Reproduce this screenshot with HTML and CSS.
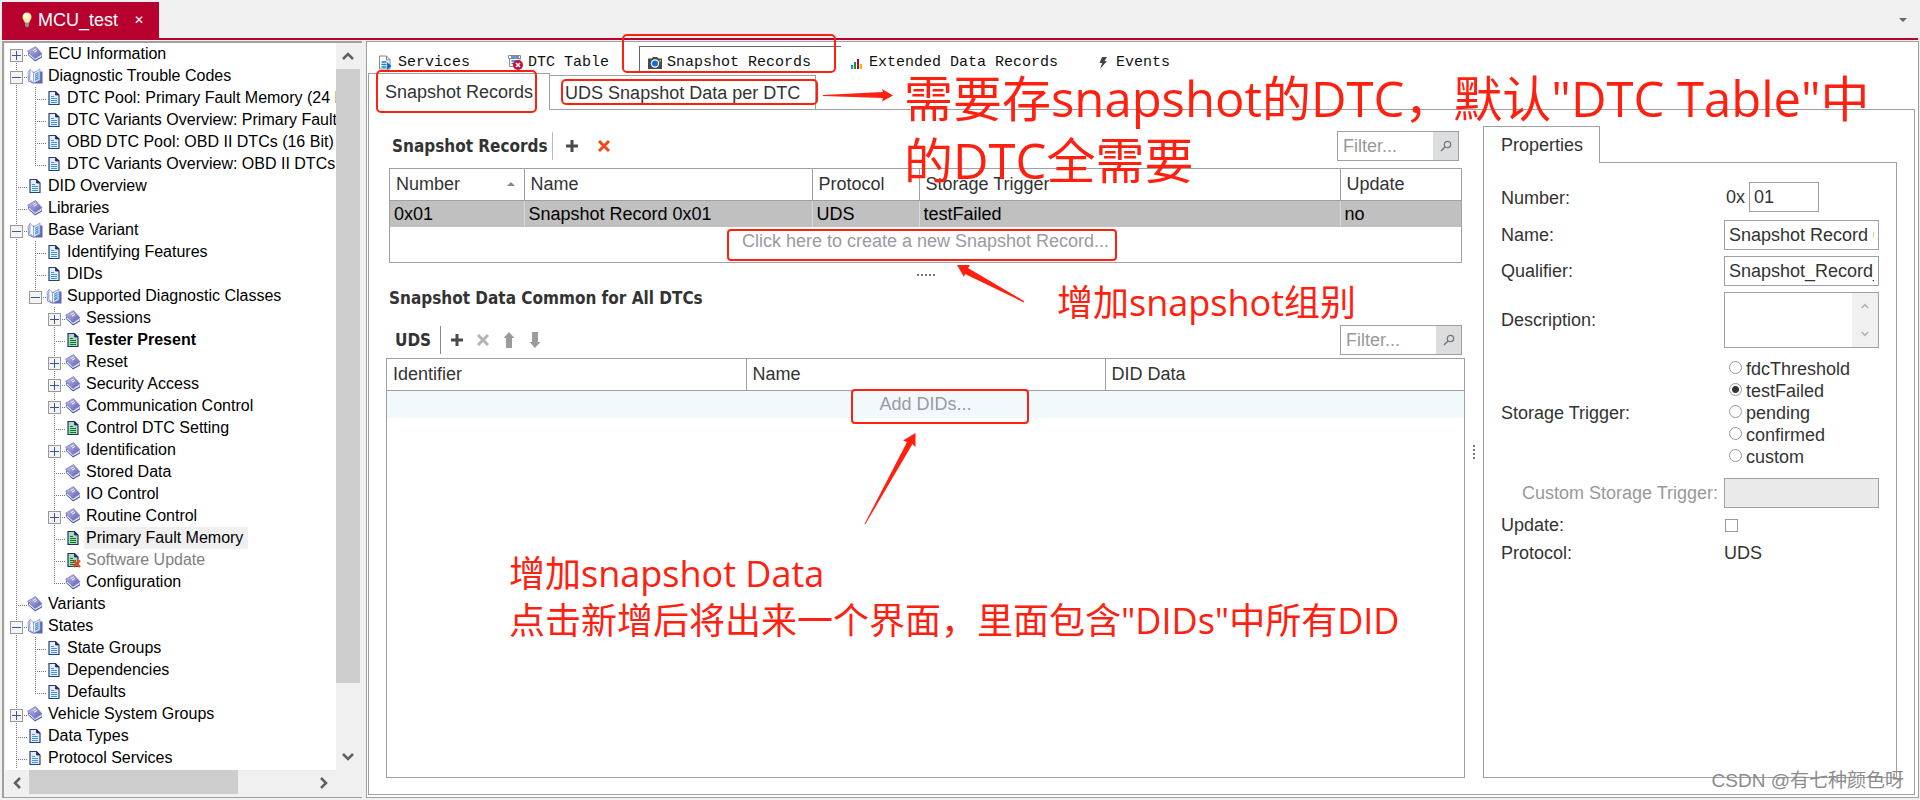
FILE: index.html
```
<!DOCTYPE html>
<html lang="zh-CN">

<head>
  <meta charset="UTF-8" />
  <meta name="viewport" content="width=device-width, initial-scale=1.0" />
  <title>MCU_test</title>
  <link rel="stylesheet" href="styles.css">
</head>

<body>
  <!-- icons -->
  <svg class="sprite" aria-hidden="true">
    <defs>
      <linearGradient id="g-book" x1="0" y1="0" x2="1" y2="1">
        <stop offset="0" stop-color="#c4c4ee" />
        <stop offset="1" stop-color="#5a5ab4" />
      </linearGradient>
      <linearGradient id="g-page" x1="0" y1="0" x2="1" y2="0">
        <stop offset="0" stop-color="#fff" />
        <stop offset="1" stop-color="#c9d6f2" />
      </linearGradient>
    </defs>
    <symbol id="book" viewBox="0 0 16 16">
      <path d="M1 6v3l7 6.500 7-4V9l-7 4z" fill="#4f5da8" />
      <path d="M2 7.500l6 5.200 6.500-3.500v1.300L8 14 1.500 8.500z" fill="#f2f4fb" />
      <path d="M0.500 5.200L8.500 0.500l6.500 7.300-7 4.700z" fill="url(#g-book)" stroke="#6a6ab8" stroke-width=".6" />
      <path d="M5.800 4.600l3-1.700M7 6.200l3-1.700" stroke="#fff" stroke-width="1" />
    </symbol>
    <symbol id="book-open" viewBox="0 0 16 16">
      <path d="M1 4v9l5 2.500h9.500V3.500H13z" fill="#5b68b4" />
      <path d="M1 4l2-2v9.500l4 3L1.500 13z" fill="#dfe6f8" stroke="#7d8cc8" stroke-width=".7" />
      <path d="M3 1l3.500 4v10L3 11.500z" fill="#fff" stroke="#8794cc" stroke-width=".7" />
      <path d="M6.500 5L13 1v11l-6.500 3z" fill="url(#g-page)" stroke="#8794cc" stroke-width=".7" />
      <path d="M8 6.500l3.500-2M8 8.500l3.500-2M8 10.500l3.500-2M8 12.300l3.500-2" stroke="#3c8fd0" stroke-width="1.100" />
    </symbol>
    <symbol id="doc" viewBox="0 0 16 16">
      <path d="M3 1.500h6.500L13 5v9.500H3z" fill="#e2effa" stroke="#27407c" stroke-width="1.200" />
      <path d="M9.500 1.500V5H13z" fill="#27276c" stroke="#27276c" stroke-width=".8" />
      <path d="M5 6.500h3M5 8.500h6M5 10.500h6M5 12.500h6" stroke="#3f97d8" />
    </symbol>
    <symbol id="doc-green" viewBox="0 0 16 16">
      <path d="M3 1.500h6.500L13 5v9.500H3z" fill="#a6dcc0" stroke="#27305c" stroke-width="1.200" />
      <path d="M9.500 1.500V5H13z" fill="#27276c" stroke="#27276c" stroke-width=".8" />
      <path d="M5 6.500h3M5 8.500h6M5 10.500h6M5 12.500h6" stroke="#08771c" />
    </symbol>
    <symbol id="doc-off" viewBox="0 0 16 16">
      <use href="#doc-green" />
      <path d="M8.500 8.500l6.500 6.500M15 8.500L8.500 15" stroke="#e04a20" stroke-width="2.400" />
    </symbol>
    <symbol id="bulb" viewBox="0 0 10 16">
      <circle cx="5" cy="5" r="4.500" fill="#fff3b4" />
      <path d="M1.500 7.500h7L7 11H3z" fill="#fbe9a0" />
      <path d="M3 10.500h4V14L5 15.500 3 14z" fill="#8f8f8f" />
      <circle cx="3.700" cy="3.700" r="1.600" fill="#fff" />
    </symbol>
    <symbol id="search" viewBox="0 0 12 12">
      <circle cx="7.500" cy="4.500" r="3.200" fill="none" stroke="#777" stroke-width="1.200" />
      <path d="M5.200 6.800L1 11" stroke="#777" stroke-width="1.500" />
    </symbol>
    <symbol id="plus" viewBox="0 0 14 14">
      <path d="M7 1v12M1 7h12" stroke="#4a4a4a" stroke-width="3" />
    </symbol>
    <symbol id="cross" viewBox="0 0 14 14">
      <path d="M2 2l10 10M12 2L2 12" stroke="currentColor" stroke-width="3" />
    </symbol>
    <symbol id="arrow" viewBox="0 0 12 18">
      <path d="M6 1l5.500 6H9v10H3V7H.5z" fill="#9b9b9b" />
    </symbol>
    <symbol id="chevron" viewBox="0 0 12 8">
      <path d="M1 7l5-5 5 5" fill="none" stroke="currentColor" stroke-width="2.500" />
    </symbol>
  </svg>

  <header class="titlebar">
    <div class="file-tab">
      <svg class="bulb"><use href="#bulb" /></svg>
      <span>MCU_test</span>
      <button class="file-close" aria-label="Close">✕</button>
    </div>
    <button class="tab-menu" aria-label="Open tabs"><span class="triangle-down"></span></button>
  </header>

  <div class="workspace">
    <nav class="tree-pane" aria-label="Explorer">
      <div class="tree-view">
        <ul class="tree">
          <li>
            <div class="node"><button class="toggle plus" aria-label="Expand"></button><svg class="ico"><use href="#book" /></svg><span>ECU Information</span></div>
          </li>
          <li>
            <div class="node"><button class="toggle" aria-label="Collapse"></button><svg class="ico"><use href="#book-open" /></svg><span>Diagnostic Trouble Codes</span></div>
            <ul>
              <li><div class="node leaf"><svg class="ico"><use href="#doc" /></svg><span>DTC Pool: Primary Fault Memory (24 Bit)</span></div></li>
              <li><div class="node leaf"><svg class="ico"><use href="#doc" /></svg><span>DTC Variants Overview: Primary Fault Memory</span></div></li>
              <li><div class="node leaf"><svg class="ico"><use href="#doc" /></svg><span>OBD DTC Pool: OBD II DTCs (16 Bit)</span></div></li>
              <li><div class="node leaf"><svg class="ico"><use href="#doc" /></svg><span>DTC Variants Overview: OBD II DTCs (16 Bit)</span></div></li>
            </ul>
          </li>
          <li><div class="node leaf"><svg class="ico"><use href="#doc" /></svg><span>DID Overview</span></div></li>
          <li><div class="node leaf"><svg class="ico"><use href="#book" /></svg><span>Libraries</span></div></li>
          <li>
            <div class="node"><button class="toggle" aria-label="Collapse"></button><svg class="ico"><use href="#book-open" /></svg><span>Base Variant</span></div>
            <ul>
              <li><div class="node leaf"><svg class="ico"><use href="#doc" /></svg><span>Identifying Features</span></div></li>
              <li><div class="node leaf"><svg class="ico"><use href="#doc" /></svg><span>DIDs</span></div></li>
              <li>
                <div class="node"><button class="toggle" aria-label="Collapse"></button><svg class="ico"><use href="#book-open" /></svg><span>Supported Diagnostic Classes</span></div>
                <ul>
                  <li><div class="node"><button class="toggle plus" aria-label="Expand"></button><svg class="ico"><use href="#book" /></svg><span>Sessions</span></div></li>
                  <li><div class="node leaf"><svg class="ico"><use href="#doc-green" /></svg><span class="strong">Tester Present</span></div></li>
                  <li><div class="node"><button class="toggle plus" aria-label="Expand"></button><svg class="ico"><use href="#book" /></svg><span>Reset</span></div></li>
                  <li><div class="node"><button class="toggle plus" aria-label="Expand"></button><svg class="ico"><use href="#book" /></svg><span>Security Access</span></div></li>
                  <li><div class="node"><button class="toggle plus" aria-label="Expand"></button><svg class="ico"><use href="#book" /></svg><span>Communication Control</span></div></li>
                  <li><div class="node leaf"><svg class="ico"><use href="#doc-green" /></svg><span>Control DTC Setting</span></div></li>
                  <li><div class="node"><button class="toggle plus" aria-label="Expand"></button><svg class="ico"><use href="#book" /></svg><span>Identification</span></div></li>
                  <li><div class="node leaf"><svg class="ico"><use href="#book" /></svg><span>Stored Data</span></div></li>
                  <li><div class="node leaf"><svg class="ico"><use href="#book" /></svg><span>IO Control</span></div></li>
                  <li><div class="node"><button class="toggle plus" aria-label="Expand"></button><svg class="ico"><use href="#book" /></svg><span>Routine Control</span></div></li>
                  <li><div class="node leaf"><svg class="ico"><use href="#doc-green" /></svg><span class="selected">Primary Fault Memory</span></div></li>
                  <li><div class="node leaf"><svg class="ico"><use href="#doc-off" /></svg><span class="muted">Software Update</span></div></li>
                  <li><div class="node leaf"><svg class="ico"><use href="#book" /></svg><span>Configuration</span></div></li>
                </ul>
              </li>
            </ul>
          </li>
          <li><div class="node leaf"><svg class="ico"><use href="#book" /></svg><span>Variants</span></div></li>
          <li>
            <div class="node"><button class="toggle" aria-label="Collapse"></button><svg class="ico"><use href="#book-open" /></svg><span>States</span></div>
            <ul>
              <li><div class="node leaf"><svg class="ico"><use href="#doc" /></svg><span>State Groups</span></div></li>
              <li><div class="node leaf"><svg class="ico"><use href="#doc" /></svg><span>Dependencies</span></div></li>
              <li><div class="node leaf"><svg class="ico"><use href="#doc" /></svg><span>Defaults</span></div></li>
            </ul>
          </li>
          <li><div class="node"><button class="toggle plus" aria-label="Expand"></button><svg class="ico"><use href="#book" /></svg><span>Vehicle System Groups</span></div></li>
          <li><div class="node leaf"><svg class="ico"><use href="#doc" /></svg><span>Data Types</span></div></li>
          <li><div class="node leaf"><svg class="ico"><use href="#doc" /></svg><span>Protocol Services</span></div></li>
        </ul>
      </div>
      <div class="vscroll">
        <button aria-label="Scroll up"><svg class="chev"><use href="#chevron" /></svg></button>
        <div class="track"><div class="thumb"></div></div>
        <button aria-label="Scroll down"><svg class="chev down"><use href="#chevron" /></svg></button>
      </div>
      <div class="hscroll">
        <button aria-label="Scroll left"><svg class="chev left"><use href="#chevron" /></svg></button>
        <div class="track"><div class="thumb"></div></div>
        <button aria-label="Scroll right"><svg class="chev right"><use href="#chevron" /></svg></button>
      </div>
    </nav>

    <main class="editor">
      <div class="main-tabs">
        <button class="main-tab">
          <svg class="tab-ico" viewBox="0 0 16 16">
            <path d="M1.500 1h7L12 4.500V14H1.500z" fill="#fff" stroke="#888" />
            <path d="M8.500 1v4H12" fill="none" stroke="#888" />
            <path d="M3.500 7h5M3.500 9.500h5M3.500 12h5" stroke="#1c7ad0" stroke-width="1.300" />
            <path d="M9 7l4.500 4L9 15z" fill="#0a6fd0" />
          </svg>Services</button>
        <button class="main-tab">
          <svg class="tab-ico" viewBox="0 0 16 16">
            <path d="M1.500 3.500v8h5M.5.5h12v3h-12zM12 3.500v2" fill="#fff" stroke="#888" />
            <path d="M3 2h8M3.500 6h5M3.500 8.500h3" stroke="#1c7ad0" stroke-width="1.300" />
            <circle cx="10" cy="10" r="5" fill="#c0103c" />
            <path d="M8 8l4 4M12 8l-4 4" stroke="#fff" stroke-width="1.600" />
          </svg>DTC Table</button>
        <button class="main-tab active">
          <svg class="tab-ico" viewBox="0 0 16 16">
            <path d="M1 3.500h3.500L6 2h4l1.500 1.500H15V14H1z" fill="#4a4a4a" />
            <circle cx="8" cy="8.500" r="4.200" fill="#fff" />
            <circle cx="8" cy="8.500" r="3" fill="#0a74d6" />
            <path d="M12.500 5h1.500v1.500h-1.500z" fill="#ffd21c" />
          </svg>Snapshot Records</button>
        <button class="main-tab">
          <svg class="tab-ico" viewBox="0 0 16 16">
            <path d="M2 10h2v4H2z" fill="#0a8af0" />
            <path d="M5 7h2v7H5z" fill="#0a9a28" />
            <path d="M8 4h2v10H8z" fill="#b8002e" />
            <path d="M11 9h2v5h-2z" fill="#f4b400" />
          </svg>Extended Data Records</button>
        <button class="main-tab">
          <svg class="tab-ico" viewBox="0 0 16 16">
            <path d="M6 2h5L8.500 6H11L4 14l2.200-6H3.500z" fill="#444" />
          </svg>Events</button>
      </div>

      <div class="sub-tabs">
        <button class="sub-tab active">Snapshot Records</button>
        <button class="sub-tab">UDS Snapshot Data per DTC</button>
        <div class="tab-fill"></div>
      </div>

      <div class="panel">
        <div class="lists">
          <section class="records">
            <div class="toolbar">
              <h2>Snapshot Records</h2>
              <span class="sep"></span>
              <button class="tool" aria-label="Add"><svg><use href="#plus" /></svg></button>
              <button class="tool danger" aria-label="Delete"><svg><use href="#cross" /></svg></button>
              <div class="filter">
                <input type="text" placeholder="Filter..." aria-label="Filter snapshot records">
                <button aria-label="Search"><svg><use href="#search" /></svg></button>
              </div>
            </div>
            <div class="grid-box">
              <table class="grid">
                <colgroup>
                  <col class="c-number">
                  <col class="c-name">
                  <col class="c-protocol">
                  <col>
                  <col class="c-update">
                </colgroup>
                <thead>
                  <tr>
                    <th><div class="sorted">Number<span class="triangle-up"></span></div></th>
                    <th>Name</th>
                    <th>Protocol</th>
                    <th>Storage Trigger</th>
                    <th>Update</th>
                  </tr>
                </thead>
                <tbody>
                  <tr class="current">
                    <td>0x01</td>
                    <td>Snapshot Record 0x01</td>
                    <td>UDS</td>
                    <td>testFailed</td>
                    <td>no</td>
                  </tr>
                  <tr class="create tall">
                    <td colspan="5"><button>Click here to create a new Snapshot Record...</button></td>
                  </tr>
                </tbody>
              </table>
            </div>
          </section>

          <div class="split-h"><i></i><i></i><i></i><i></i><i></i></div>
          <h2 class="section-title">Snapshot Data Common for All DTCs</h2>

          <div class="toolbar uds">
            <h2>UDS</h2>
            <span class="sep dark"></span>
            <button class="tool" aria-label="Add"><svg><use href="#plus" /></svg></button>
            <button class="tool off" aria-label="Delete" disabled><svg><use href="#cross" /></svg></button>
            <button class="tool" aria-label="Move up" disabled><svg class="move"><use href="#arrow" /></svg></button>
            <button class="tool" aria-label="Move down" disabled><svg class="move down"><use href="#arrow" /></svg></button>
            <div class="filter">
              <input type="text" placeholder="Filter..." aria-label="Filter DIDs">
              <button aria-label="Search"><svg><use href="#search" /></svg></button>
            </div>
          </div>
          <div class="grid-box fill">
            <table class="grid">
              <thead>
                <tr>
                  <th>Identifier</th>
                  <th>Name</th>
                  <th>DID Data</th>
                </tr>
              </thead>
              <tbody>
                <tr class="create hover">
                  <td colspan="3"><button>Add DIDs...</button></td>
                </tr>
              </tbody>
            </table>
          </div>
        </div>

        <div class="split-v"><i></i><i></i><i></i><i></i></div>

        <aside class="props">
          <div class="props-tabs">
            <button class="props-tab">Properties</button>
            <div class="tab-fill"></div>
          </div>
          <form class="props-form">
            <label for="number">Number:</label>
            <div class="number-field"><span>0x</span><input id="number" type="text" value="01"></div>

            <label for="name">Name:</label>
            <input id="name" type="text" value="Snapshot Record 0x01">

            <label for="qualifier">Qualifier:</label>
            <input id="qualifier" type="text" value="Snapshot_Record_0x01">

            <label for="description">Description:</label>
            <div class="memo">
              <textarea id="description"></textarea>
              <div class="memo-scroll">
                <svg class="chev small"><use href="#chevron" /></svg>
                <svg class="chev small down"><use href="#chevron" /></svg>
              </div>
            </div>

            <span id="trigger">Storage Trigger:</span>
            <div class="radios" role="radiogroup" aria-labelledby="trigger">
              <label><input type="radio" name="trigger">fdcThreshold</label>
              <label><input type="radio" name="trigger" checked>testFailed</label>
              <label><input type="radio" name="trigger">pending</label>
              <label><input type="radio" name="trigger">confirmed</label>
              <label><input type="radio" name="trigger">custom</label>
            </div>

            <label class="disabled" for="custom">Custom Storage Trigger:</label>
            <input id="custom" type="text" disabled>

            <label for="update">Update:</label>
            <input id="update" type="checkbox">

            <span>Protocol:</span>
            <span>UDS</span>
          </form>
        </aside>
      </div>
    </main>
  </div>

  <!-- notes drawn over the window -->
  <svg class="marks" aria-hidden="true">
    <g fill="none" stroke="#ff2010" stroke-width="2">
      <rect x="623" y="35" width="212" height="37" rx="4" />
      <rect x="377" y="71" width="159" height="41" rx="4" />
      <rect x="562" y="80" width="255" height="24" rx="4" />
      <rect x="728" y="230" width="388" height="30" rx="3" />
      <rect x="852" y="390" width="176" height="33" rx="3" />
    </g>
    <g fill="#ff2010">
      <path d="M823 95l60-3-1-3 11 6.500-11 6 1-3.500-60-2z" />
      <path d="M1024 302.500L965 274l-1 3-7-12 13 0-2 3 56 33z" />
      <path d="M864.500 524L907 442l-4-1.500 12.500-7.500v14l-3-3-47 80z" />
    </g>
  </svg>
  <p class="note note-tab">需要存snapshot的DTC，默认"DTC Table"中<br>的DTC全需要</p>
  <p class="note note-group">增加snapshot组别</p>
  <p class="note note-data">增加snapshot Data<br>点击新增后将出来一个界面，里面包含"DIDs"中所有DID</p>
  <p class="watermark">CSDN @有七种颜色呀</p>
</body>

</html>
```
FILE: styles.css
```
* {
  box-sizing: border-box;
  margin: 0;
  padding: 0;
}

body {
  position: relative;
  display: flex;
  flex-direction: column;
  height: 100vh;
  overflow: hidden;
  background: #f0f0f0;
  color: #333;
  font: 18px/22px "Liberation Sans", Arial, sans-serif;
}

button,
input,
textarea {
  font: inherit;
  color: inherit;
  border: 0;
  background: none;
  outline: none;
}

ul {
  list-style: none;
}

.sprite {
  position: absolute;
  width: 0;
  height: 0;
}

/* title bar */
.titlebar {
  display: flex;
  justify-content: space-between;
  height: 40px;
  margin: 0 2px;
  padding-top: 2px;
  border-bottom: 2px solid #b8002e;
}

.file-tab {
  display: flex;
  align-items: center;
  width: 157px;
  padding-left: 20px;
  background: #b8002e;
  color: #fff;
}

.bulb {
  width: 10px;
  height: 16px;
  margin-right: 6px;
}

.file-close {
  margin-left: 16px;
  font: 12px/22px "DejaVu Sans", sans-serif;
}

.tab-menu {
  padding: 0 11px;
}

.triangle-down,
.triangle-up {
  display: block;
  border: 4px solid transparent;
}

.triangle-down {
  border-top-color: #666;
  border-bottom-width: 0;
}

.triangle-up {
  border-bottom-color: #888;
  border-top-width: 0;
}

.workspace {
  display: flex;
  flex: 1;
  gap: 4px;
  min-height: 0;
  padding: 1px 1px 2px 2px;
}

/* tree */
.tree-pane {
  display: grid;
  grid-template: 1fr 27px / 1fr 26px;
  width: 360px;
  border: 1px solid #a0a0a0;
  border-width: 2px 0 1px 2px;
  padding-left: 1px;
}

.tree-view {
  min-height: 0;
  overflow: hidden;
  background: #fff;
}

.tree {
  color: #000;
  font-size: 16px;
  white-space: nowrap;
}

.tree ul {
  padding-left: 19px;
}

.tree li {
  background: repeating-linear-gradient(#777 0 1px, transparent 1px 2px) 11px 0 / 1px 100% no-repeat;
}

.tree > li:first-child {
  background-position: 11px 12px;
}

.tree ul li:last-child {
  background-size: 1px 12px;
}

.node {
  display: flex;
  align-items: center;
  height: 22px;
  padding-left: 5px;
  background: repeating-linear-gradient(90deg, #777 0 1px, transparent 1px 2px) 11px 12px / 11px 1px no-repeat;
}

.node.leaf {
  padding-left: 22px;
}

.node span {
  padding: 0 5px 0 2px;
}

.node .strong {
  font-weight: bold;
}

.node .selected {
  background: #f0f0f0;
}

.node .muted {
  color: #808080;
}

.ico {
  flex: none;
  width: 16px;
  height: 16px;
  margin-right: 3px;
}

.toggle {
  width: 13px;
  height: 13px;
  margin: 2px 4px 0 0;
  border: 1px solid #989898;
  background: linear-gradient(#3c549c, #3c549c) center / 9px 1px no-repeat, #f4f4f4;
}

.toggle.plus {
  background: linear-gradient(#3c549c, #3c549c) center / 9px 1px no-repeat,
    linear-gradient(#3c549c, #3c549c) center / 1px 9px no-repeat, #f4f4f4;
}

.vscroll,
.hscroll {
  display: flex;
}

.vscroll {
  flex-direction: column;
  padding-right: 2px;
}

.vscroll button,
.hscroll button {
  display: flex;
  flex: none;
  align-items: center;
  justify-content: center;
  width: 24px;
  height: 26px;
  color: #606060;
}

.track {
  display: flex;
  flex: 1;
}

.thumb {
  background: #cdcdcd;
}

.vscroll .thumb {
  width: 100%;
  height: 91%;
}

.hscroll .thumb {
  width: 74%;
  height: 24px;
}

.chev {
  width: 12px;
  height: 8px;
}

.chev.small {
  width: 8px;
  height: 6px;
}

.chev.down {
  transform: rotate(180deg);
}

.chev.left {
  transform: rotate(-90deg);
}

.chev.right {
  transform: rotate(90deg);
}

/* editor */
.editor {
  display: flex;
  flex: 1;
  flex-direction: column;
  min-width: 0;
  border: 1px solid #a0a0a0;
  padding: 1px 3px 2px 1px;
  background: #fff;
}

.main-tabs {
  display: flex;
  height: 30px;
  padding: 3px 0 0 2px;
}

.main-tab {
  display: flex;
  align-items: center;
  padding: 6px 30px 0 8px;
  color: #111;
  font: 15px/18px "Liberation Mono", monospace;
  white-space: nowrap;
}

.main-tab.active {
  border: 1px solid #666;
  border-width: 1px 0 0 1px;
  padding: 5px 30px 0 7px;
}

.tab-ico {
  width: 16px;
  height: 16px;
  margin-right: 4px;
}

.sub-tabs,
.props-tabs {
  display: flex;
  align-items: flex-end;
  height: 37px;
}

.sub-tab {
  height: 35px;
  padding: 0 15px;
  border: 1px solid #a0a0a0;
  border-left: 0;
}

.sub-tab.active {
  height: 37px;
  padding: 0 16px;
  border-left: 1px solid #a0a0a0;
  border-bottom: 0;
}

.tab-fill {
  flex: 1;
  border-bottom: 1px solid #a0a0a0;
}

.panel {
  display: flex;
  flex: 1;
  min-height: 0;
  border: 1px solid #a0a0a0;
  border-top: 0;
  padding: 16px 17px;
}

.lists {
  display: flex;
  flex: 1;
  flex-direction: column;
  min-width: 0;
  padding-top: 5px;
}

.records {
  padding: 0 3px;
}

.toolbar {
  display: flex;
  align-items: center;
  height: 30px;
  margin-bottom: 7px;
  padding: 0 3px;
}

.toolbar.uds {
  margin-bottom: 3px;
  padding-left: 9px;
}

h2 {
  font: bold 17px/22px "DejaVu Sans Condensed", "DejaVu Sans", sans-serif;
}

.section-title {
  margin-bottom: 16px;
  padding-left: 3px;
}

.sep {
  width: 1px;
  height: 28px;
  margin: 0 6px 0 4px;
  background: #bbb;
}

.sep.dark {
  margin: 0 3px 0 9px;
  background: #888;
}

.tool {
  display: flex;
  align-items: center;
  justify-content: center;
  width: 26px;
  height: 26px;
}

.danger {
  margin-left: 6px;
  color: #f04818;
}

.off {
  color: #b4b4b4;
}

.tool svg {
  width: 14px;
  height: 14px;
}

.tool .move {
  width: 12px;
  height: 18px;
}

.move.down {
  transform: rotate(180deg);
}

.filter {
  display: flex;
  width: 122px;
  height: 30px;
  margin-left: auto;
  border: 1px solid #a0a0a0;
}

.filter input {
  flex: 1;
  min-width: 0;
  padding-left: 5px;
}

.filter input::placeholder {
  color: #999;
}

.filter button {
  width: 25px;
  background: #dcdddf;
}

.filter svg {
  width: 12px;
  height: 12px;
}

.grid-box {
  border: 1px solid #a0a0a0;
}

.grid-box.fill {
  flex: 1;
}

.grid {
  width: 100%;
  table-layout: fixed;
  border-collapse: collapse;
}

.c-number {
  width: 134px;
}

.c-name {
  width: 288px;
}

.c-protocol {
  width: 107px;
}

.c-update {
  width: 121px;
}

.grid th {
  height: 31px;
  padding-left: 6px;
  border-bottom: 1px solid #a0a0a0;
  font-weight: normal;
  text-align: left;
}

.grid th + th {
  border-left: 1px solid #a0a0a0;
}

.sorted {
  display: flex;
  align-items: center;
  justify-content: space-between;
  padding-right: 9px;
}

.grid td {
  height: 27px;
  padding-left: 4px;
}

.current {
  background: #c0c0c0;
  color: #000;
}

.current td + td {
  border-left: 1px solid #d8d8d8;
}

.create td {
  padding: 0;
  color: #9a9aa2;
  text-align: center;
  vertical-align: top;
}

.create button {
  height: 27px;
}

.create.tall td {
  height: 35px;
}

.create.hover {
  background: #f1f9fd;
}

.split-h,
.split-v {
  display: flex;
  align-items: center;
  justify-content: center;
  gap: 2px;
}

.split-h {
  height: 24px;
}

.split-v {
  flex-direction: column;
  width: 18px;
}

.split-h i,
.split-v i {
  width: 2px;
  height: 2px;
  background: #777;
}

/* properties */
.props {
  display: flex;
  flex-direction: column;
  width: 414px;
}

.props-tab {
  height: 37px;
  padding: 0 16px 0 17px;
  border: 1px solid #a0a0a0;
  border-bottom: 0;
}

.props-form {
  display: grid;
  flex: 1;
  grid-template-columns: 1fr 155px;
  align-content: start;
  align-items: center;
  row-gap: 6px;
  border: 1px solid #a0a0a0;
  border-top: 0;
  padding: 19px 17px;
}

.props-form input[type="text"] {
  width: 100%;
  height: 30px;
  padding: 0 4px;
  border: 1px solid #a0a0a0;
}

.number-field {
  display: flex;
  align-items: center;
  gap: 4px;
  padding: 0 60px 2px 2px;
}

.memo {
  display: flex;
  height: 56px;
  border: 1px solid #a0a0a0;
}

.memo textarea {
  flex: 1;
  min-width: 0;
  resize: none;
}

.memo-scroll {
  display: flex;
  flex-direction: column;
  align-items: center;
  justify-content: space-between;
  width: 26px;
  padding: 10px 0;
  background: #f0f0f0;
  color: #b4b4b4;
}

.radios {
  padding: 4px 0 4px 5px;
}

.radios label {
  display: flex;
  align-items: center;
  gap: 4px;
}

.radios input {
  appearance: none;
  width: 13px;
  height: 13px;
  margin-bottom: 3px;
  border: 1px solid #999;
  border-radius: 50%;
}

.radios input:checked {
  background: radial-gradient(#333 0 3px, transparent 4px);
}

.disabled {
  padding-right: 6px;
  color: #999;
  text-align: right;
}

.props-form input:disabled {
  background: #eaeaea;
}

.props-form input[type="checkbox"] {
  appearance: none;
  width: 13px;
  height: 13px;
  margin-left: 1px;
  border: 1px solid #999;
}

/* notes */
.marks {
  position: absolute;
  top: 0;
  left: 0;
  width: 100%;
  height: 100%;
  pointer-events: none;
}

.note {
  position: absolute;
  color: #ff2010;
  font: 36px/47px "Open Sans", "Noto Sans CJK SC", sans-serif;
  white-space: nowrap;
  pointer-events: none;
}

.note-tab {
  top: 67px;
  left: 904px;
  font-size: 49px;
  line-height: 62px;
}

.note-group {
  top: 279px;
  left: 1057px;
}

.note-data {
  top: 550px;
  left: 509px;
}

.watermark {
  position: absolute;
  right: 16px;
  bottom: 6px;
  color: #8c8c8c;
  font: 19px/26px "Liberation Sans", "Noto Sans CJK SC", sans-serif;
}
```
